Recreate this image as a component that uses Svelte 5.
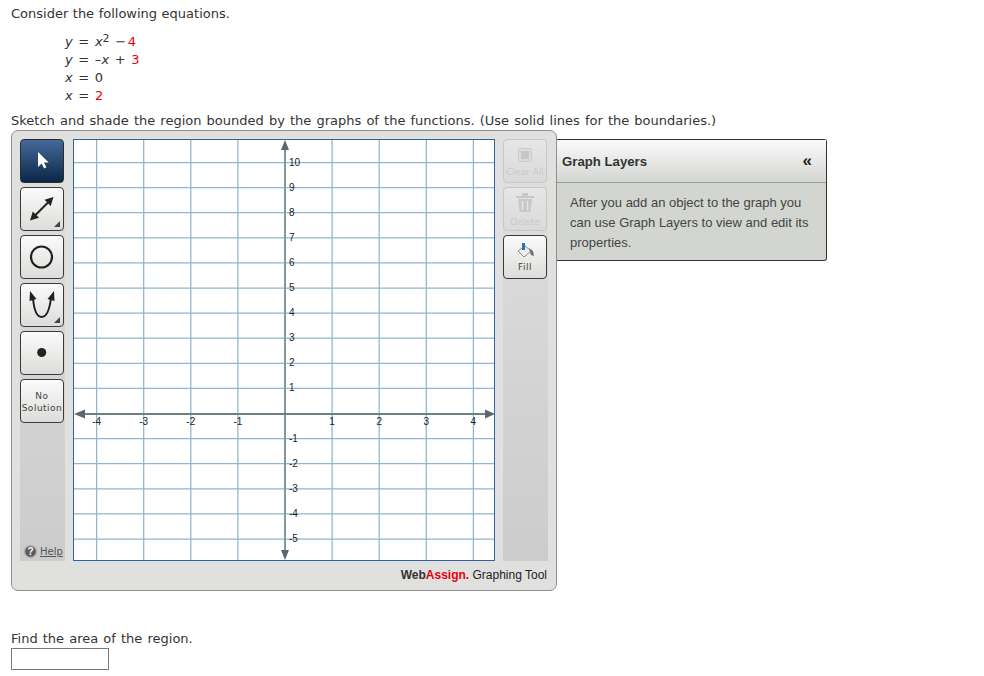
<script>
  const xTicks = [-4, -3, -2, -1, 1, 2, 3, 4];
  const yTicks = [10, 9, 8, 7, 6, 5, 4, 3, 2, 1, -1, -2, -3, -4, -5];
  const gx = (v) => 212 + v * 47.1;
  const gy = (v) => 274.5 - v * 25.1;
</script>

<div class="page">
  <p class="intro">Consider the following equations.</p>
  <div class="eqs">
    <div><i>y</i> = <i>x</i><sup>2</sup> <span class="tight">−</span> <span class="red">4</span></div>
    <div><i>y</i> = –<i>x</i> + <span class="red">3</span></div>
    <div><i>x</i> = 0</div>
    <div><i>x</i> = <span class="red">2</span></div>
  </div>
  <p class="sketch">Sketch and shade the region bounded by the graphs of the functions. (Use solid lines for the boundaries.)</p>

  <div class="tool">
    <div class="panel">
      <div class="main">
        <div class="strip">
          <button class="btn active" aria-label="Select">
            <svg width="44" height="44" viewBox="0 0 44 44"><path d="M18 13v15l3.600-3.400 2.600 4.800 2.200-1.100-2.500-4.700h4.800z" fill="#fff" /></svg>
          </button>
          <button class="btn" aria-label="Line">
            <svg width="44" height="44" viewBox="0 0 44 44">
              <path d="M13 30.500 30.500 13" stroke="#222" stroke-width="2" />
              <path d="M10 33.500l2.800-9 6.200 6.200zM33.500 10l-9 2.800 6.200 6.200z" fill="#222" />
              <path d="M40 34v6h-6z" fill="#444" />
            </svg>
          </button>
          <button class="btn" aria-label="Circle">
            <svg width="44" height="44" viewBox="0 0 44 44"><circle cx="21.500" cy="22" r="10.500" fill="none" stroke="#222" stroke-width="2.200" /></svg>
          </button>
          <button class="btn" aria-label="Parabola">
            <svg width="44" height="44" viewBox="0 0 44 44">
              <path d="M13 15C14 27 17 34 21.700 34S29.500 27 31 15" fill="none" stroke="#222" stroke-width="2" />
              <path d="M10 8 9.500 18l7-2zM34 8l-6.500 8 7 2z" fill="#222" />
              <path d="M40 34v6h-6z" fill="#444" />
            </svg>
          </button>
          <button class="btn" aria-label="Point">
            <svg width="44" height="44" viewBox="0 0 44 44"><circle cx="21.700" cy="21.500" r="4.500" fill="#222" /></svg>
          </button>
          <button class="btn label">No<br />Solution</button>
          <div class="help">
            <svg width="15" height="15" viewBox="0 0 15 15">
              <circle cx="7.500" cy="7.500" r="6" fill="#5a5a5a" stroke="#b0b0b0" stroke-width="1.500" />
              <text x="7.500" y="11" text-anchor="middle" class="q">?</text>
            </svg>
            <span>Help</span>
          </div>
        </div>

        <svg class="graph" width="422" height="422" viewBox="0 0 422 422">
          <rect x="0.500" y="0.500" width="421" height="421" fill="#fff" stroke="#2d659c" />
          {#each xTicks as v}
            <line x1={gx(v)} x2={gx(v)} y1="1" y2="421" class="grid" />
          {/each}
          {#each yTicks as v}
            <line x1="1" x2="421" y1={gy(v)} y2={gy(v)} class="grid" />
          {/each}
          <line x1="212" x2="212" y1="10" y2="412" stroke="#84979f" stroke-width="2" />
          <line x1="10" x2="412" y1="275" y2="275" stroke="#6f7f86" stroke-width="2" />
          <path d="M212 1l-4 10h8zM212 421l-4-10h8zM1 275l11-4.500v9zM422 275l-10-4.500v9z" fill="#5d666b" />
          {#each xTicks as v}
            <text x={gx(v)} y="286" text-anchor="middle" class="tick">{v}</text>
          {/each}
          {#each yTicks as v}
            <text x="216" y={gy(v) + 3} class="tick">{v}</text>
          {/each}
        </svg>

        <div class="strip">
          <button class="btn off stack clear" aria-label="Clear All">
            <svg width="14" height="14" viewBox="0 0 14 14"><rect x="0.500" y="0.500" width="13" height="13" rx="1" fill="#dcdcdc" stroke="#cbcbcb" /><rect x="3" y="3" width="8" height="8" fill="#c6c6c6" /></svg>
            <span>Clear All</span>
          </button>
          <button class="btn off stack del" aria-label="Delete">
            <svg width="18" height="19" viewBox="0 0 18 19"><path d="M6 0h6v3h6v2H0V3h6zM2 6h14l-1.500 13h-11z" fill="#c8c8c8" /><path d="M6.500 8v9M11.500 8v9" stroke="#e4e4e4" stroke-width="1.500" /></svg>
            <span>Delete</span>
          </button>
          <button class="btn stack fill" aria-label="Fill">
            <svg width="17" height="15" viewBox="0 0 17 15">
              <path d="M1 8l7-5 6 5-7 6z" fill="#f1f1f1" stroke="#8a8a8a" />
              <path d="M5 0h3v7H5z" fill="#2f6fc0" />
              <path d="M12 5l4 3 1 5-3-1-1-3z" fill="#6f6f6f" />
            </svg>
            <span>Fill</span>
          </button>
        </div>
      </div>
      <div class="brand"><b class="web">Web</b><b class="assign">Assign.</b> Graphing Tool</div>
    </div>

    <div class="layers">
      <div class="layers-head">
        <span class="layers-title">Graph Layers</span>
        <span class="chev">«</span>
      </div>
      <div class="layers-body">After you add an object to the graph you can use Graph Layers to view and edit its properties.</div>
    </div>
  </div>

  <p class="find">Find the area of the region.</p>
  <input class="answer" type="text" />
</div>

<style>
  :global(body) {
    margin: 0;
    background: #fff;
  }
  .page {
    padding: 6px 0 0 11px;
    font-family: "DejaVu Sans", sans-serif;
    font-size: 13px;
    color: #333;
  }
  p {
    margin: 0;
    line-height: 15px;
    word-spacing: 1px;
  }
  .intro {
    word-spacing: 0.4px;
  }
  .eqs {
    margin: 12px 0 0 54px;
    line-height: 18px;
    word-spacing: 1.500px;
  }
  .eqs sup {
    font-size: 11px;
    line-height: 0;
    vertical-align: 4px;
  }
  .tight {
    margin-right: -4px;
  }
  .red {
    color: #e8000d;
  }
  .sketch {
    margin-top: 8px;
  }
  .tool {
    display: flex;
    align-items: flex-start;
    margin-top: 2px;
  }
  .panel {
    box-sizing: border-box;
    width: 546px;
    height: 461px;
    padding: 8px 8px 0;
    background: #e0e0df;
    border: 1px solid #8f8f8f;
    border-radius: 7px;
  }
  .main {
    display: flex;
    gap: 8px;
    height: 422px;
  }
  .strip {
    position: relative;
    display: flex;
    flex-direction: column;
    gap: 4px;
    width: 45px;
    height: 422px;
    flex: none;
    background: linear-gradient(#e0e0df 0, #d2d2d2 65%, #cccccc 100%);
  }
  .btn {
    box-sizing: border-box;
    width: 44px;
    height: 44px;
    padding: 0;
    display: flex;
    flex-direction: column;
    align-items: center;
    justify-content: center;
    border: 1px solid #3a3a3a;
    border-radius: 4px;
    background: linear-gradient(#fbfbfb, #dcdcda);
    font-family: "DejaVu Sans", sans-serif;
    font-size: 9px;
    line-height: 12px;
    letter-spacing: 0.5px;
    color: #444;
    flex: none;
    overflow: hidden;
    white-space: nowrap;
  }
  .btn svg {
    flex: none;
  }
  .btn.label {
    padding-top: 2px;
  }
  .btn.stack {
    justify-content: flex-start;
    gap: 4px;
  }
  .btn.clear {
    padding-top: 8px;
    letter-spacing: 0;
  }
  .btn.del {
    padding-top: 5px;
    letter-spacing: 0;
  }
  .btn.fill {
    padding-top: 7px;
    gap: 3px;
  }
  .btn.active {
    background: linear-gradient(#44699a, #0b2748);
    border-color: #2c2c2c;
  }
  .btn.off {
    background: linear-gradient(#e6e6e6, #dadada);
    border-color: #c8c8c8;
    color: #c9c9c9;
  }
  .help {
    position: absolute;
    left: 3px;
    bottom: 2px;
    display: flex;
    align-items: center;
    gap: 2px;
    font-size: 10px;
    color: #555;
    text-decoration: underline;
  }
  .q {
    font: bold 10px "Liberation Sans", sans-serif;
    fill: #fff;
  }
  .graph {
    flex: none;
    display: block;
  }
  .grid {
    stroke: #8fb6ca;
    stroke-width: 1.250px;
  }
  .tick {
    font: 10px "Liberation Sans", sans-serif;
    fill: #222;
  }
  .brand {
    margin: 6px 1px 0 0;
    text-align: right;
    font: 12px/16px "Liberation Sans", sans-serif;
    color: #222;
  }
  .web {
    color: #333;
  }
  .assign {
    color: #e8000d;
  }
  .layers {
    box-sizing: border-box;
    width: 270px;
    margin-top: 9px;
    border: 1px solid #333;
    border-left: 0;
    border-radius: 0 3px 3px 0;
    font-family: "Liberation Sans", sans-serif;
    background: #d3d5d1;
  }
  .layers-head {
    display: flex;
    align-items: center;
    justify-content: space-between;
    height: 42px;
    padding: 0 14px 0 5px;
    background: linear-gradient(#fafafa, #d4d6d3);
    border-bottom: 1px solid #9a9a9a;
  }
  .layers-title {
    font-size: 13.200px;
    font-weight: bold;
    color: #333;
  }
  .chev {
    font-size: 17px;
    font-weight: bold;
    color: #222;
  }
  .layers-body {
    padding: 10px 17px 7px 13px;
    font-size: 13px;
    line-height: 20px;
    color: #444;
  }
  .find {
    margin-top: 40px;
  }
  .answer {
    display: block;
    box-sizing: border-box;
    width: 98px;
    height: 22px;
    margin-top: 2px;
    border: 1px solid #7a7a7a;
    background: #fff;
    padding: 0;
  }
</style>
